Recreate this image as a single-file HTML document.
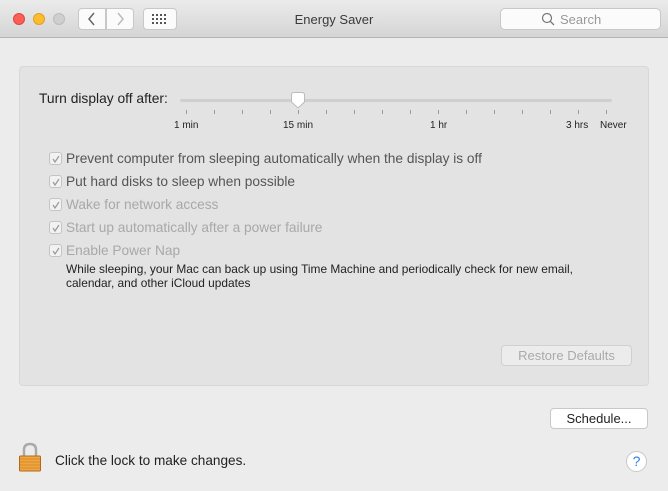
<!DOCTYPE html>
<html><head><style>
*{margin:0;padding:0;box-sizing:border-box}
body{width:668px;height:491px;background:#ececec;font-family:"Liberation Sans",sans-serif;position:relative;overflow:hidden;color:#222}
.a{position:absolute}
#tb{left:0;top:0;width:668px;height:38px;background:linear-gradient(#ebebeb,#d5d5d5);border-bottom:1px solid #b5b5b5}
.dot{width:12px;height:12px;border-radius:50%;top:13px}
.btn{background:#fbfbfb;border:1px solid #c8c8c8;border-radius:4px}
.cb{left:49px;width:13px;height:13px;border:1px solid #c4c4c4;border-radius:3px;background:#f2f2f2}
.cb svg{position:absolute;left:1px;top:1px}
.lb{left:66px;font-size:13.7px}
.tick{width:1px;height:4px;background:#999;top:110px}
.tl{font-size:10px;top:120px;color:#222}
</style></head><body>
<div id="tb" class="a"></div>
<div class="a dot" style="left:13px;background:#fc5f57;border:1px solid #e0443e"></div>
<div class="a dot" style="left:33px;background:#fdbc2e;border:1px solid #dea123"></div>
<div class="a dot" style="left:53px;background:#cfcfcf;border:1px solid #bcbcbc"></div>
<div class="a btn" style="left:78px;top:8px;width:28px;height:22px;border-radius:4px 0 0 4px"></div>
<div class="a btn" style="left:106px;top:8px;width:28px;height:22px;border-radius:0 4px 4px 0"></div>
<svg class="a" style="left:86px;top:12px" width="12" height="14"><path d="M8 1L3 7L8 13" stroke="#666" stroke-width="1.5" fill="none"/></svg>
<svg class="a" style="left:114px;top:12px" width="12" height="14"><path d="M4 1L9 7L4 13" stroke="#bbb" stroke-width="1.5" fill="none"/></svg>
<div class="a btn" style="left:143px;top:8px;width:34px;height:22px"></div>
<svg class="a" style="left:152px;top:13px" width="16" height="12"><g fill="#555"><rect x="0" y="1" width="2" height="2"/><rect x="4" y="1" width="2" height="2"/><rect x="8" y="1" width="2" height="2"/><rect x="12" y="1" width="2" height="2"/><rect x="0" y="5" width="2" height="2"/><rect x="4" y="5" width="2" height="2"/><rect x="8" y="5" width="2" height="2"/><rect x="12" y="5" width="2" height="2"/><rect x="0" y="9" width="2" height="2"/><rect x="4" y="9" width="2" height="2"/><rect x="8" y="9" width="2" height="2"/><rect x="12" y="9" width="2" height="2"/></g></svg>
<div class="a" style="left:0;width:668px;top:12px;text-align:center;font-size:13px;color:#3a3a3a">Energy Saver</div>
<div class="a btn" style="left:500px;top:8px;width:161px;height:22px;border-radius:5px"></div>
<svg class="a" style="left:541px;top:12px" width="14" height="14"><circle cx="6" cy="6" r="4.5" stroke="#777" stroke-width="1.2" fill="none"/><path d="M9.3 9.3L13 13" stroke="#777" stroke-width="1.3"/></svg>
<div class="a" style="left:560px;top:12px;font-size:13px;color:#999">Search</div>

<div class="a" style="left:19px;top:66px;width:630px;height:320px;background:#e3e3e3;border:1px solid #d8d8d8;border-radius:4px"></div>
<div class="a" style="left:39px;top:91px;font-size:13.8px">Turn display off after:</div>
<div class="a" style="left:180px;top:99px;width:432px;height:3px;border-radius:2px;background:#cfcfcf"></div>
<div class="a tick" style="left:186px"></div><div class="a tick" style="left:214px"></div><div class="a tick" style="left:242px"></div><div class="a tick" style="left:270px"></div><div class="a tick" style="left:298px"></div><div class="a tick" style="left:326px"></div><div class="a tick" style="left:354px"></div><div class="a tick" style="left:382px"></div><div class="a tick" style="left:410px"></div><div class="a tick" style="left:438px"></div><div class="a tick" style="left:466px"></div><div class="a tick" style="left:494px"></div><div class="a tick" style="left:522px"></div><div class="a tick" style="left:550px"></div><div class="a tick" style="left:578px"></div><div class="a tick" style="left:606px"></div>
<svg class="a" style="left:289px;top:92px" width="18" height="18"><path d="M2.5 3Q2.5 0.5 5 0.5H13Q15.5 0.5 15.5 3V10L9 16L2.5 10Z" fill="#fff" stroke="#bbb"/></svg>
<div class="a tl" style="left:174px">1 min</div>
<div class="a tl" style="left:283px">15 min</div>
<div class="a tl" style="left:430px">1 hr</div>
<div class="a tl" style="left:566px">3 hrs</div>
<div class="a tl" style="left:600px">Never</div>

<div class="a cb" style="top:152px"><svg width="10" height="10"><path d="M2 5L4 8L8 2" stroke="#999" stroke-width="1.2" fill="none"/></svg></div>
<div class="a lb" style="top:151px;color:#555">Prevent computer from sleeping automatically when the display is off</div>
<div class="a cb" style="top:175px"><svg width="10" height="10"><path d="M2 5L4 8L8 2" stroke="#999" stroke-width="1.2" fill="none"/></svg></div>
<div class="a lb" style="top:174px;color:#555">Put hard disks to sleep when possible</div>
<div class="a cb" style="top:198px"><svg width="10" height="10"><path d="M2 5L4 8L8 2" stroke="#999" stroke-width="1.2" fill="none"/></svg></div>
<div class="a lb" style="top:197px;color:#a8a8a8">Wake for network access</div>
<div class="a cb" style="top:221px"><svg width="10" height="10"><path d="M2 5L4 8L8 2" stroke="#999" stroke-width="1.2" fill="none"/></svg></div>
<div class="a lb" style="top:220px;color:#a8a8a8">Start up automatically after a power failure</div>
<div class="a cb" style="top:244px"><svg width="10" height="10"><path d="M2 5L4 8L8 2" stroke="#999" stroke-width="1.2" fill="none"/></svg></div>
<div class="a lb" style="top:243px;color:#a8a8a8">Enable Power Nap</div>
<div class="a" style="left:66px;top:262px;font-size:11.9px;line-height:14px;color:#222">While sleeping, your Mac can back up using Time Machine and periodically check for new email,<br>calendar, and other iCloud updates</div>

<div class="a btn" style="left:501px;top:345px;width:131px;height:21px;background:#ececec;border-color:#d0d0d0"></div>
<div class="a" style="left:501px;top:348px;width:131px;text-align:center;font-size:13px;color:#aaa">Restore Defaults</div>

<div class="a btn" style="left:550px;top:408px;width:98px;height:21px;background:#fff"></div>
<div class="a" style="left:550px;top:411px;width:98px;text-align:center;font-size:13px">Schedule...</div>

<svg class="a" style="left:15px;top:441px" width="30" height="32"><path d="M9 15V9Q9 3 15 3Q21 3 21 9V15" stroke="#aaa" stroke-width="2.5" fill="none"/><rect x="4.5" y="15" width="21" height="15" rx="1" fill="#f0a540" stroke="#b06a1a"/><g stroke="#d98a2a" stroke-width="1"><line x1="5" y1="18" x2="25" y2="18"/><line x1="5" y1="21" x2="25" y2="21"/><line x1="5" y1="24" x2="25" y2="24"/><line x1="5" y1="27" x2="25" y2="27"/></g></svg>
<div class="a" style="left:55px;top:453px;font-size:13.6px">Click the lock to make changes.</div>
<div class="a" style="left:626px;top:451px;width:21px;height:21px;border-radius:50%;background:#fff;border:1px solid #c8c8c8;text-align:center;font-size:14px;line-height:19px;color:#2a7ef0">?</div>
</body></html>
